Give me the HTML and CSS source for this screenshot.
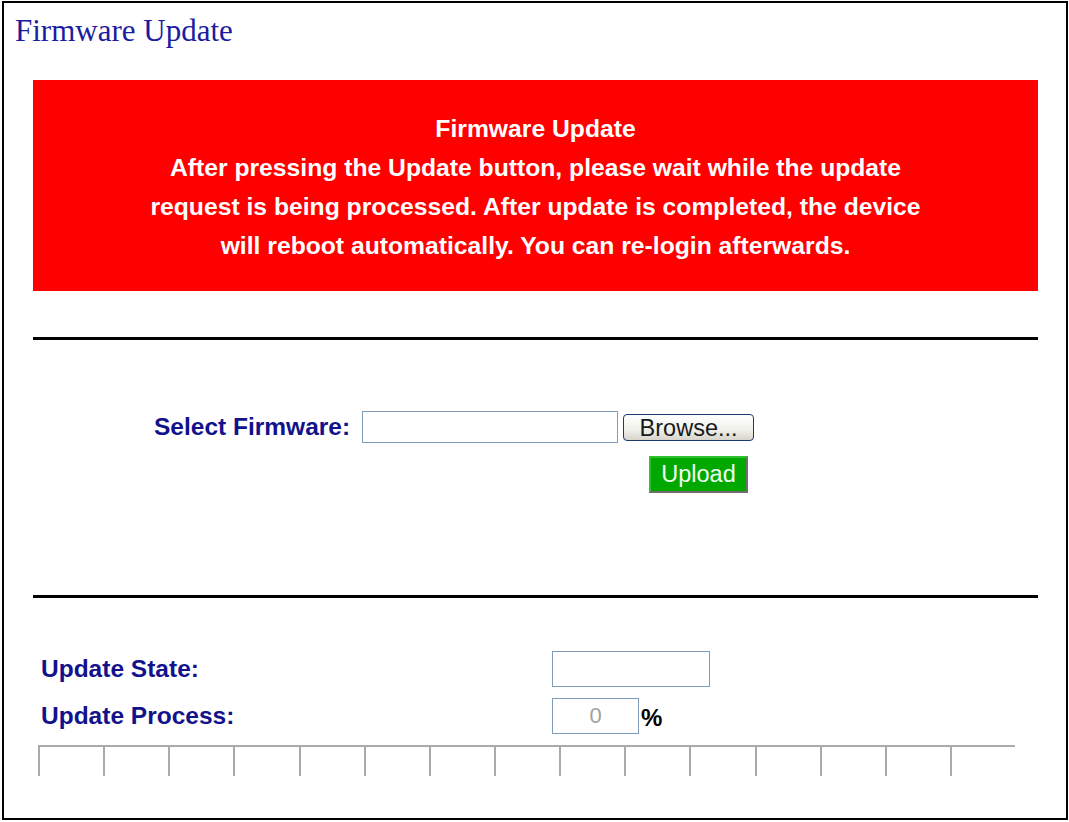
FILE: index.html
```html
<!DOCTYPE html>
<html lang="en">
<head>
  <meta charset="UTF-8">
  <title>Firmware Update</title>
  <link rel="stylesheet" href="styles.css">
</head>
<body>
  <div class="frame">
    <!-- Page title -->
    <h1 class="page-title">Firmware Update</h1>

    <div class="content">
      <!-- Warning box -->
      <div class="notice">
        <div>Firmware Update</div>
        <div>After pressing the Update button, please wait while the update</div>
        <div>request is being processed. After update is completed, the device</div>
        <div>will reboot automatically. You can re-login afterwards.</div>
      </div>

      <div class="rule rule-top"></div>

      <!-- File select -->
      <div class="select-row">
        <label class="label" for="fw-file">Select Firmware:</label>
        <input class="file-text" id="fw-file" type="text">
        <button class="browse-button" type="button">Browse...</button>
      </div>
      <div class="upload-row">
        <button class="upload-button" type="button">Upload</button>
      </div>

      <div class="rule rule-bottom"></div>

      <!-- Status -->
      <div class="status-grid">
        <span class="label">Update State:</span>
        <div class="field"><input class="state-box" type="text"></div>
        <span class="label">Update Process:</span>
        <div class="field">
          <input class="percent-box" type="text" value="0">
          <span class="percent">%</span>
        </div>
      </div>

      <div class="progress">
        <div class="cell"></div><div class="cell"></div><div class="cell"></div>
        <div class="cell"></div><div class="cell"></div><div class="cell"></div>
        <div class="cell"></div><div class="cell"></div><div class="cell"></div>
        <div class="cell"></div><div class="cell"></div><div class="cell"></div>
        <div class="cell"></div><div class="cell"></div><div class="cell"></div>
      </div>
    </div>
  </div>
</body>
</html>
```

FILE: styles.css
```css
* {
  box-sizing: border-box;
  margin: 0;
  padding: 0;
}

body {
  font-family: 'Liberation Sans', Arial, sans-serif;
  background-color: #FFFFFF;
  color: #000000;
}

.frame {
  margin: 1px 1px 0 2px;
  height: 819px;
  border: 2px solid #000000;
}

.page-title {
  font-family: 'Liberation Serif', 'Times New Roman', serif;
  font-weight: normal;
  font-size: 31px;
  line-height: 34px;
  color: #1C1CA0;
  height: 77px;
  padding: 11px 0 0 11px;
}

.content {
  padding: 0 28px 0 29px;
}

/* Red warning box */
.notice {
  background-color: #FF0000;
  color: #FFFFFF;
  font-weight: bold;
  font-size: 24.7px;
  line-height: 39px;
  text-align: center;
  height: 211px;
  padding-top: 29px;
}

.rule {
  height: 3px;
  background-color: #000000;
}

.rule-top {
  margin-top: 46px;
}

.rule-bottom {
  margin-top: 102px;
}

.label {
  font-weight: bold;
  font-size: 24.5px;
  color: #12128C;
}

.select-row {
  display: flex;
  align-items: center;
  margin-top: 71px;
  padding-left: 121px;
  height: 32px;
}

.file-text {
  width: 256px;
  height: 32px;
  margin-left: 12px;
  border: 1px solid #7F9DB9;
}

.browse-button {
  width: 131px;
  height: 27px;
  margin-left: 5px;
  font-family: 'Liberation Sans', Arial, sans-serif;
  font-size: 23.5px;
  color: #1A1A1A;
  border: 1px solid #1C3A6E;
  border-radius: 4px;
  background: linear-gradient(#FFFFFF, #F0F0EA 60%, #D6D4CA);
}

.upload-row {
  margin-top: 13px;
  padding-left: 616px;
}

.upload-button {
  width: 99px;
  height: 37px;
  font-family: 'Liberation Sans', Arial, sans-serif;
  font-size: 23.5px;
  color: #F0FFF0;
  background-color: #00A800;
  border: 2px solid;
  border-color: #2FC02F #6E6E6E #6E6E6E #2FC02F;
}

/* Status rows */
.status-grid {
  display: grid;
  grid-template-columns: 511px auto;
  grid-auto-rows: 36px;
  row-gap: 11px;
  align-items: center;
  margin-top: 53px;
  padding-left: 8px;
}

.field {
  display: flex;
  align-items: center;
}

.state-box {
  width: 158px;
  height: 36px;
  border: 1px solid #7F9DB9;
}

.percent-box {
  width: 87px;
  height: 36px;
  border: 1px solid #7F9DB9;
  text-align: center;
  font-family: 'Liberation Sans', Arial, sans-serif;
  font-size: 22px;
  color: #A0A0A0;
}

.percent {
  font-weight: bold;
  font-size: 24px;
  margin-left: 2px;
  padding-top: 4px;
}

/* Progress bar cells */
.progress {
  display: flex;
  width: 977px;
  margin: 11px 0 0 5px;
}

.cell {
  flex: 1;
  height: 31px;
  border-top: 2px solid #AAAAAA;
  border-left: 2px solid #AAAAAA;
}
```
